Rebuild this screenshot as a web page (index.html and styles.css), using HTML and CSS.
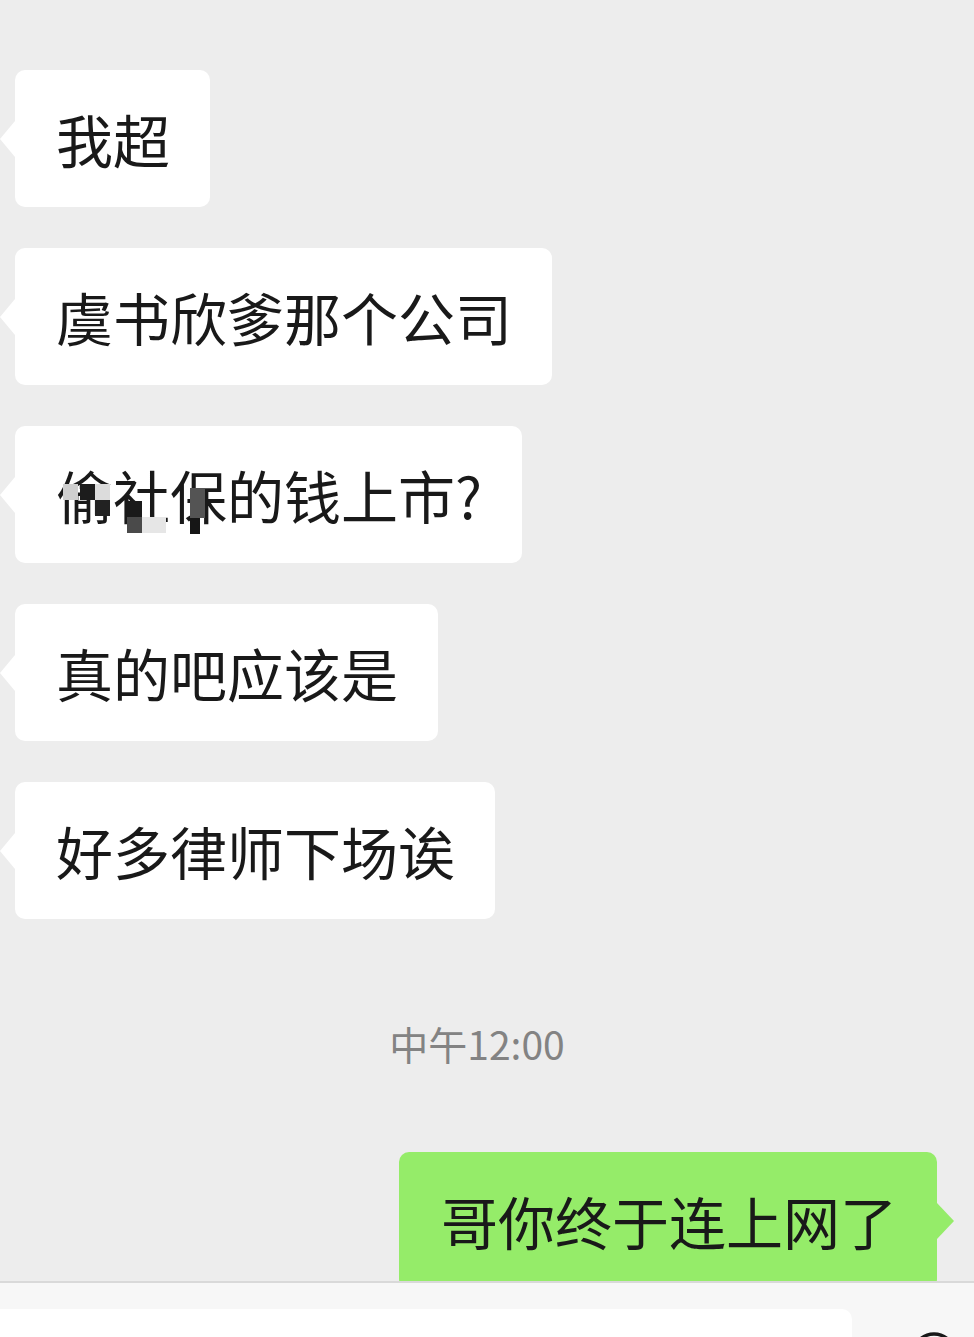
FILE: index.html
```html
<!DOCTYPE html>
<html lang="zh-CN">
<head>
    <meta charset="UTF-8">
    <meta name="viewport" content="width=device-width, initial-scale=1.0">
    <title>聊天</title>
    <link rel="stylesheet" href="styles.css">
</head>
<body>
    <div class="chat">
        <div class="messages">
            <div class="row">
                <div class="bubble">我超</div>
            </div>
            <div class="row">
                <div class="bubble">虞书欣爹那个公司</div>
            </div>
            <div class="row">
                <div class="bubble">偷社保的钱上市?
                    <span class="mosaic m1"></span>
                    <span class="mosaic m2"></span>
                    <span class="mosaic m3"></span>
                    <span class="mosaic m4"></span>
                    <span class="mosaic m5"></span>
                    <span class="mosaic m6"></span>
                    <span class="mosaic m7"></span>
                    <span class="mosaic m8"></span>
                    <span class="mosaic m9"></span>
                </div>
            </div>
            <div class="row">
                <div class="bubble">真的吧应该是</div>
            </div>
            <div class="row">
                <div class="bubble">好多律师下场诶</div>
            </div>

            <div class="time">中午12:00</div>

            <div class="row me">
                <div class="bubble">哥你终于连上网了</div>
            </div>
        </div>

        <div class="input-bar">
            <div class="input"></div>
            <svg class="icon" width="48" height="48" viewBox="0 0 48 48">
                <circle cx="24" cy="24" r="21" fill="none" stroke="#181818" stroke-width="3.5"/>
            </svg>
        </div>
    </div>
</body>
</html>
```

FILE: styles.css
```css
body {
    margin: 0;
    padding: 0;
    background-color: #ededed;
    font-family: "Noto Sans CJK SC", "Noto Sans", sans-serif;
    color: #191919;
}

.chat {
    height: 1337px;
    display: flex;
    flex-direction: column;
    overflow: hidden;
}

.messages {
    height: 1281px;
    flex-shrink: 0;
    overflow: hidden;
    padding-top: 70px;
    box-sizing: border-box;
    display: flex;
    flex-direction: column;
    gap: 41px;
}

.row {
    display: flex;
    flex-shrink: 0;
    padding-left: 15px;
}

.row.me {
    justify-content: flex-end;
    padding-left: 0;
    padding-right: 37px;
}

.bubble {
    position: relative;
    background: #fff;
    font-size: 57px;
    line-height: 80px;
    padding: 28px 40px 29px 41px;
    border-radius: 10px;
    white-space: nowrap;
}

.bubble::before {
    content: "";
    position: absolute;
    left: -15px;
    top: 50%;
    margin-top: -18px;
    border-top: 18px solid transparent;
    border-bottom: 18px solid transparent;
    border-right: 15px solid #fff;
}

.me .bubble {
    background: #95ec69;
    padding-left: 42px;
}

.me .bubble::before {
    left: auto;
    right: -17px;
    border-right: none;
    border-left: 17px solid #95ec69;
}

.time {
    flex-shrink: 0;
    text-align: center;
    font-family: "Noto Sans CJK SC", Roboto, sans-serif;
    font-size: 39px;
    line-height: 50px;
    color: #838383;
    margin: 58px 0 43px;
    padding-right: 20px;
}

.mosaic {
    position: absolute;
    width: 15px;
    height: 16px;
}

.m1 { left: 48px; top: 58px; background: #cfcfcf; }
.m2 { left: 65px; top: 58px; background: #1c1c1c; }
.m3 { left: 80px; top: 58px; background: #dcdcdc; }
.m4 { left: 80px; top: 74px; background: #222; }
.m5 { left: 112px; top: 75px; background: #1a1a1a; }
.m6 { left: 112px; top: 91px; background: #4a4a4a; }
.m7 { left: 127px; top: 91px; width: 24px; background: #e6e6e6; }
.m8 { left: 175px; top: 62px; height: 30px; background: #545454; }
.m9 { left: 175px; top: 92px; width: 10px; background: #161616; }

.input-bar {
    flex: 1;
    background: #f7f7f7;
    border-top: 2px solid #d9d9d9;
    display: flex;
    align-items: flex-start;
    padding-top: 26px;
}

.input {
    width: 852px;
    height: 60px;
    flex-shrink: 0;
    background: #fff;
    border-radius: 0 10px 0 0;
}

.icon {
    margin-left: 58px;
    margin-top: 22px;
    flex-shrink: 0;
}
```
